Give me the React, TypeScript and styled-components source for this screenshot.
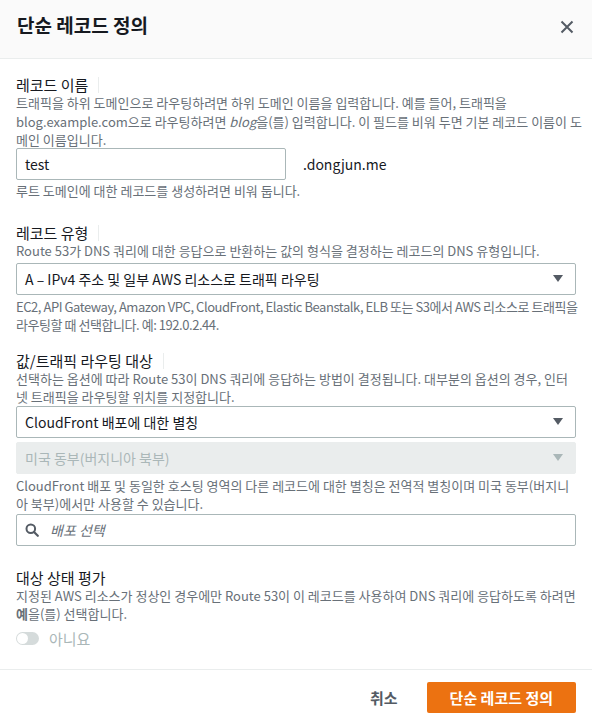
import * as React from 'react';
import styled, { createGlobalStyle } from 'styled-components';

const GlobalStyle = createGlobalStyle`
    html, body {
        margin: 0;
        padding: 0;
        background: #ffffff;
    }
    body {
        font-family: "Noto Sans CJK KR", Roboto, sans-serif;
        color: #16191f;
    }
`;

const Modal = styled.div`
    display: flex;
    flex-direction: column;
    width: 592px;
    height: 721px;
    background: #ffffff;
    overflow: hidden;
`;

const Header = styled.div`
    display: flex;
    align-items: center;
    justify-content: space-between;
    flex-shrink: 0;
    height: 59px;
    padding: 0 17px 8px 17px;
    box-sizing: border-box;
    background: #fafafa;
    border-bottom: 1px solid #eaeded;
`;

const Title = styled.h2`
    margin: 0;
    font-size: 19px;
    line-height: 22px;
    font-weight: 700;
    color: #16191f;
`;

const CloseButton = styled.button`
    display: flex;
    align-items: center;
    justify-content: center;
    width: 20px;
    height: 20px;
    padding: 0;
    margin: 4px -2px 0 0;
    border: none;
    background: none;
`;

const Body = styled.div`
    display: flex;
    flex-direction: column;
    flex: 1;
    padding: 17px 16px 0 16px;
`;

const Field = styled.div<{ after?: number }>`
    display: flex;
    flex-direction: column;
    margin-bottom: ${(p) => p.after ?? 0}px;
`;

const Label = styled.div`
    display: flex;
    align-items: center;
    font-size: 15px;
    line-height: 18px;
    color: #16191f;
`;

const Separator = styled.span`
    width: 1px;
    height: 16px;
    margin-left: 10px;
    background: #eaeded;
`;

const Description = styled.div<{ gap?: number; tight?: boolean }>`
    font-size: 13px;
    line-height: 18.5px;
    color: #687078;
    white-space: nowrap;
    letter-spacing: ${(p) => (p.tight ? '-0.45px' : 'normal')};
    margin-top: ${(p) => p.gap ?? 0}px;
`;

const Row = styled.div`
    display: flex;
    align-items: center;
    gap: 17px;
    margin-top: -2px;
`;

const TextInput = styled.div`
    display: flex;
    align-items: center;
    width: 270px;
    height: 32px;
    box-sizing: border-box;
    padding: 0 8px;
    border: 1px solid #aab7b8;
    border-radius: 2px;
    font-size: 14px;
    color: #16191f;
`;

const Suffix = styled.span`
    font-size: 14px;
    color: #16191f;
`;

const Select = styled.div<{ disabled?: boolean; top?: number }>`
    display: flex;
    align-items: center;
    justify-content: space-between;
    height: 32px;
    box-sizing: border-box;
    margin-top: ${(p) => p.top ?? 0}px;
    padding: 0 12px 0 8px;
    border: 1px solid ${(p) => (p.disabled ? '#eaeded' : '#aab7b8')};
    border-radius: 2px;
    background: ${(p) => (p.disabled ? '#eaeded' : '#ffffff')};
    font-size: 14px;
    color: ${(p) => (p.disabled ? '#aab7b8' : '#16191f')};
`;

const Caret = styled.span<{ disabled?: boolean }>`
    width: 0;
    height: 0;
    border-left: 5.5px solid transparent;
    border-right: 5.5px solid transparent;
    border-top: 7px solid ${(p) => (p.disabled ? '#aab7b8' : '#545b64')};
`;

const Search = styled.div`
    display: flex;
    align-items: center;
    gap: 11px;
    height: 32px;
    box-sizing: border-box;
    padding: 0 8px;
    border: 1px solid #aab7b8;
    border-radius: 2px;
`;

const Placeholder = styled.span`
    font-size: 14px;
    font-style: italic;
    color: #687078;
`;

const ToggleRow = styled.div`
    display: flex;
    align-items: center;
    gap: 10px;
    margin-top: 8px;
    font-size: 15px;
    line-height: 14px;
    color: #aab7b8;
`;

const Track = styled.span`
    display: flex;
    align-items: center;
    width: 23px;
    height: 13px;
    padding: 0 1px;
    box-sizing: border-box;
    border-radius: 7px;
    background: #d5dbdb;
`;

const Knob = styled.span`
    width: 11px;
    height: 11px;
    border-radius: 50%;
    background: #ffffff;
`;

const Footer = styled.div`
    display: flex;
    align-items: flex-start;
    justify-content: flex-end;
    flex-shrink: 0;
    gap: 29px;
    height: 52px;
    box-sizing: border-box;
    padding: 12px 16px 0 16px;
    border-top: 1px solid #eaeded;
`;

const Button = styled.button<{ primary?: boolean }>`
    height: 31px;
    padding: 0 ${(p) => (p.primary ? '23px' : '0')};
    border: none;
    border-radius: 2px;
    background: ${(p) => (p.primary ? '#ec7211' : 'transparent')};
    color: ${(p) => (p.primary ? '#ffffff' : '#545b64')};
    font-family: "Noto Sans CJK KR", Roboto, sans-serif;
    font-size: 15px;
    font-weight: 700;
`;

const App = () => (
    <Modal>
        <GlobalStyle />
        <Header>
            <Title>단순 레코드 정의</Title>
            <CloseButton aria-label="닫기">
                <svg width="14" height="14" viewBox="0 0 14 14">
                    <path d="M1.5 1.5 L12.5 12.5 M12.5 1.5 L1.5 12.5" stroke="#545b64" strokeWidth="2" fill="none" />
                </svg>
            </CloseButton>
        </Header>
        <Body>
            <Field after={24}>
                <Label>
                    레코드 이름
                    <Separator />
                </Label>
                <Description>
                    트래픽을 하위 도메인으로 라우팅하려면 하위 도메인 이름을 입력합니다. 예를 들어, 트래픽을
                    <br />
                    blog.example.com으로 라우팅하려면 <i>blog</i>을(를) 입력합니다. 이 필드를 비워 두면 기본 레코드 이름이 도
                    <br />
                    메인 이름입니다.
                </Description>
                <Row>
                    <TextInput>test</TextInput>
                    <Suffix>.dongjun.me</Suffix>
                </Row>
                <Description gap={2}>루트 도메인에 대한 레코드를 생성하려면 비워 둡니다.</Description>
            </Field>

            <Field after={17}>
                <Label>
                    레코드 유형
                    <Separator />
                </Label>
                <Description>Route 53가 DNS 쿼리에 대한 응답으로 반환하는 값의 형식을 결정하는 레코드의 DNS 유형입니다.</Description>
                <Select top={2}>
                    A – IPv4 주소 및 일부 AWS 리소스로 트래픽 라우팅
                    <Caret />
                </Select>
                <Description gap={3} tight>
                    EC2, API Gateway, Amazon VPC, CloudFront, Elastic Beanstalk, ELB 또는 S3에서 AWS 리소스로 트래픽을
                    <br />
                    라우팅할 때 선택합니다. 예: 192.0.2.44.
                </Description>
            </Field>

            <Field after={23}>
                <Label>
                    값/트래픽 라우팅 대상
                    <Separator />
                </Label>
                <Description>
                    선택하는 옵션에 따라 Route 53이 DNS 쿼리에 응답하는 방법이 결정됩니다. 대부분의 옵션의 경우, 인터
                    <br />
                    넷 트래픽을 라우팅할 위치를 지정합니다.
                </Description>
                <Select top={-1}>
                    CloudFront 배포에 대한 별칭
                    <Caret />
                </Select>
                <Select disabled top={4}>
                    미국 동부(버지니아 북부)
                    <Caret disabled />
                </Select>
                <Description gap={3}>
                    CloudFront 배포 및 동일한 호스팅 영역의 다른 레코드에 대한 별칭은 전역적 별칭이며 미국 동부(버지니
                    <br />
                    아 북부)에서만 사용할 수 있습니다.
                </Description>
                <Search>
                    <svg width="14" height="14" viewBox="0 0 14 14">
                        <circle cx="5.8" cy="5.8" r="4.3" stroke="#545b64" strokeWidth="2" fill="none" />
                        <path d="M9 9 L12.8 12.8" stroke="#545b64" strokeWidth="2.2" strokeLinecap="round" />
                    </svg>
                    <Placeholder>배포 선택</Placeholder>
                </Search>
            </Field>

            <Field>
                <Label>대상 상태 평가</Label>
                <Description>
                    지정된 AWS 리소스가 정상인 경우에만 Route 53이 이 레코드를 사용하여 DNS 쿼리에 응답하도록 하려면
                    <br />
                    <b>예</b>을(를) 선택합니다.
                </Description>
                <ToggleRow>
                    <Track>
                        <Knob />
                    </Track>
                    아니요
                </ToggleRow>
            </Field>
        </Body>
        <Footer>
            <Button>취소</Button>
            <Button primary>단순 레코드 정의</Button>
        </Footer>
    </Modal>
);

export default App;
